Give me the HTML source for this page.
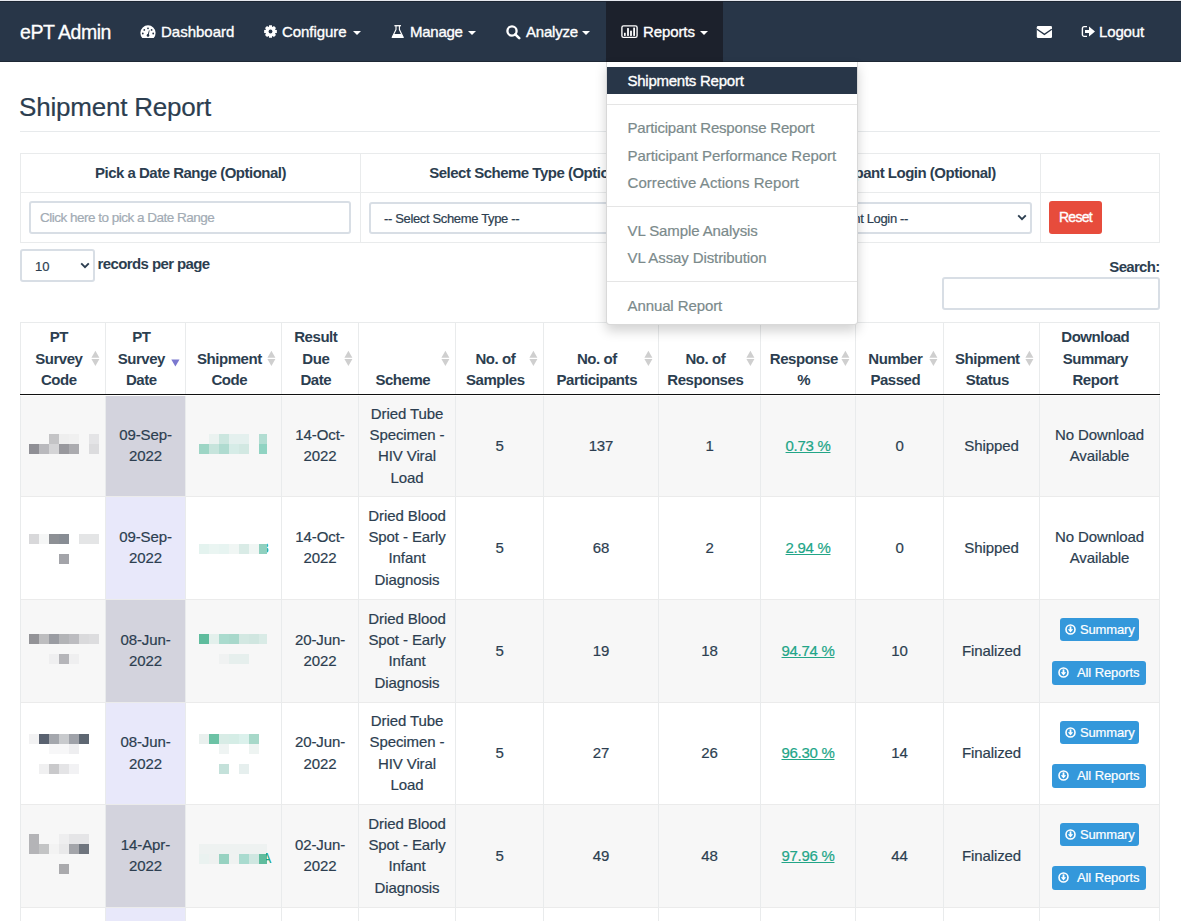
<!DOCTYPE html>
<html><head><meta charset="utf-8"><title>Shipment Report</title>
<style>
*{box-sizing:border-box}
html,body{margin:0;padding:0;width:1181px;height:921px;overflow:hidden;background:#fff}
body{font-family:"Liberation Sans",sans-serif;position:relative}
.a{position:absolute;white-space:nowrap;font-family:"Liberation Sans",sans-serif}
.r{position:absolute}
.n{-webkit-text-stroke:0.2px currentColor}
</style></head><body>
<div class="r" style="left:0px;top:0px;width:1181px;height:1px;background:#e6e9ef;"></div>
<div class="r" style="left:0px;top:1px;width:1181px;height:61px;background:#283648;"></div>
<div class="r" style="left:0px;top:61px;width:1181px;height:1px;background:#1e2835;"></div>
<div class="r" style="left:0px;top:1px;width:1181px;height:1px;background:#1d2633;"></div>
<div class="r" style="left:606px;top:1px;width:117px;height:61px;background:#1c212c;"></div>
<div class="r" style="left:606px;top:61px;width:117px;height:1px;background:#151920;"></div>
<div class="a n" style="top:22.69px;font-size:19.5px;line-height:19.5px;color:#fff;letter-spacing:-0.45px;left:20px;-webkit-text-stroke:0.3px #fff">ePT Admin</div>
<div class="a n" style="top:24.30px;font-size:15px;line-height:15px;color:#fff;left:161px;-webkit-text-stroke:0.35px #fff">Dashboard</div>
<div class="a n" style="top:24.30px;font-size:15px;line-height:15px;color:#fff;letter-spacing:-0.05px;left:282px;-webkit-text-stroke:0.35px #fff">Configure</div>
<div class="a n" style="top:24.30px;font-size:15px;line-height:15px;color:#fff;letter-spacing:-0.25px;left:410px;-webkit-text-stroke:0.35px #fff">Manage</div>
<div class="a n" style="top:24.30px;font-size:15px;line-height:15px;color:#fff;letter-spacing:-0.2px;left:526px;-webkit-text-stroke:0.35px #fff">Analyze</div>
<div class="a n" style="top:24.30px;font-size:15px;line-height:15px;color:#fff;letter-spacing:-0.1px;left:643px;-webkit-text-stroke:0.35px #fff">Reports</div>
<div class="a n" style="top:24.30px;font-size:15px;line-height:15px;color:#fff;letter-spacing:-0.15px;left:1099px;-webkit-text-stroke:0.35px #fff">Logout</div>
<div class="r" style="left:353px;top:31px;width:0;height:0;border-left:4px solid transparent;border-right:4px solid transparent;border-top:4px solid #fff"></div>
<div class="r" style="left:468px;top:31px;width:0;height:0;border-left:4px solid transparent;border-right:4px solid transparent;border-top:4px solid #fff"></div>
<div class="r" style="left:582px;top:31px;width:0;height:0;border-left:4px solid transparent;border-right:4px solid transparent;border-top:4px solid #fff"></div>
<div class="r" style="left:700px;top:31px;width:0;height:0;border-left:4px solid transparent;border-right:4px solid transparent;border-top:4px solid #fff"></div>
<svg class="r" style="left:140px;top:25px" width="16" height="14" viewBox="0 0 16 14">
<path d="M2.3 13 A7.6 7.6 0 1 1 13.7 13 Z" fill="#fff"/>
<circle cx="8" cy="3.3" r="0.9" fill="#283648"/><circle cx="4.3" cy="4.9" r="0.9" fill="#283648"/><circle cx="11.6" cy="4.9" r="0.9" fill="#283648"/>
<circle cx="2.8" cy="8.5" r="0.9" fill="#283648"/><circle cx="13.2" cy="8.5" r="0.9" fill="#283648"/>
<circle cx="8" cy="10.4" r="1.3" fill="#283648"/><path d="M7.4 10.2 L9 5.2 L9.6 5.4 L8.6 10.6 Z" fill="#283648"/>
</svg>
<svg class="r" style="left:264px;top:25px" width="13" height="13" viewBox="0 0 13 13">
<polygon points="12.84,5.08 12.84,7.92 11.09,8.23 10.96,8.52 11.99,9.98 9.98,11.99 8.52,10.96 8.23,11.09 7.92,12.84 5.08,12.84 4.77,11.09 4.48,10.96 3.02,11.99 1.01,9.98 2.04,8.52 1.91,8.23 0.16,7.92 0.16,5.08 1.91,4.77 2.04,4.48 1.01,3.02 3.02,1.01 4.48,2.04 4.77,1.91 5.08,0.16 7.92,0.16 8.23,1.91 8.52,2.04 9.98,1.01 11.99,3.02 10.96,4.48 11.09,4.77" fill="#fff"/><circle cx="6.5" cy="6.5" r="1.9" fill="#283648"/></svg>
<svg class="r" style="left:391px;top:24px" width="14" height="15" viewBox="0 0 14 15">
<path d="M3.4 1.7 H10" fill="none" stroke="#fff" stroke-width="1.3"/>
<path d="M5 1.7 V5.6 L1.1 13.4 M8.4 1.7 V5.6 L12.3 13.4" fill="none" stroke="#fff" stroke-width="1.1"/>
<path d="M2.9 9.9 H10.5 L12.9 14 H0.5 Z" fill="#fff"/></svg>
<svg class="r" style="left:505px;top:24px" width="16" height="16" viewBox="0 0 16 16">
<circle cx="7" cy="7" r="4.6" fill="none" stroke="#fff" stroke-width="2.3"/>
<path d="M10.3 10.3 L14.2 14.2" stroke="#fff" stroke-width="2.6" stroke-linecap="round"/></svg>
<svg class="r" style="left:621px;top:25px" width="17" height="14" viewBox="0 0 17 14">
<rect x="0.9" y="0.8" width="15.2" height="11.6" rx="1.6" fill="none" stroke="#fff" stroke-width="1.35"/>
<rect x="3" y="7.8" width="1.7" height="3.1" fill="#fff"/><rect x="6.1" y="3.1" width="1.8" height="7.8" fill="#fff"/>
<rect x="9.1" y="5.7" width="1.8" height="5.2" fill="#fff"/><rect x="12.2" y="2.6" width="1.8" height="8.3" fill="#fff"/></svg>
<svg class="r" style="left:1036px;top:25px" width="17" height="14" viewBox="0 0 17 14">
<rect x="0.8" y="0.9" width="15.2" height="12.2" rx="1.3" fill="#fff"/>
<path d="M1 4.2 L8.4 9.4 L15.8 4.2" fill="none" stroke="#283648" stroke-width="1.3"/></svg>
<svg class="r" style="left:1081px;top:25px" width="16" height="13" viewBox="0 0 16 13">
<path d="M6 1.6 H3.2 A1.8 1.8 0 0 0 1.4 3.4 V9.6 A1.8 1.8 0 0 0 3.2 11.4 H6" fill="none" stroke="#fff" stroke-width="1.4"/>
<path d="M4 5 H8 V1.6 L14 6.5 L8 11.4 V8 H4 Z" fill="#fff"/></svg>
<div class="a n" style="top:93.99px;font-size:26px;line-height:26px;color:#2c3e50;letter-spacing:-0.2px;left:19px;">Shipment Report</div>
<div class="r" style="left:20px;top:131px;width:1140px;height:1px;background:#e7eaec;"></div>
<div class="r" style="left:20px;top:153px;width:1140px;height:1px;background:#e9ebec;"></div>
<div class="r" style="left:20px;top:192px;width:1140px;height:1px;background:#e9ebec;"></div>
<div class="r" style="left:20px;top:242px;width:1140px;height:1px;background:#e9ebec;"></div>
<div class="r" style="left:20px;top:153px;width:1px;height:90px;background:#e9ebec;"></div>
<div class="r" style="left:360px;top:153px;width:1px;height:90px;background:#e9ebec;"></div>
<div class="r" style="left:703px;top:153px;width:1px;height:90px;background:#e9ebec;"></div>
<div class="r" style="left:1040px;top:153px;width:1px;height:90px;background:#e9ebec;"></div>
<div class="r" style="left:1159px;top:153px;width:1px;height:90px;background:#e9ebec;"></div>
<div class="a" style="top:165.30px;font-size:15px;line-height:15px;color:#2c3e50;font-weight:700;letter-spacing:-0.5px;left:-109.5px;width:600px;text-align:center;">Pick a Date Range (Optional)</div>
<div class="a" style="top:165.30px;font-size:15px;line-height:15px;color:#2c3e50;font-weight:700;letter-spacing:-0.5px;left:231.5px;width:600px;text-align:center;">Select Scheme Type (Optional)</div>
<div class="a" style="top:165.30px;font-size:15px;line-height:15px;color:#2c3e50;font-weight:700;letter-spacing:-0.5px;left:581.5px;width:600px;text-align:center;">Select Participant Login (Optional)</div>
<div class="r" style="left:29px;top:201px;width:322px;height:33px;border:2px solid #d8dee5;border-radius:3px;background:#fff"></div>
<div class="a n" style="top:210.57px;font-size:13.5px;line-height:13.5px;color:#a2abb4;letter-spacing:-0.5px;left:40px;">Click here to pick a Date Range</div>
<div class="r" style="left:369px;top:202px;width:325px;height:32px;border:2px solid #d8dee5;border-radius:3px;background:#fff"></div>
<div class="a n" style="top:212.00px;font-size:13px;line-height:13px;color:#2c3e50;letter-spacing:-0.35px;left:384px;">-- Select Scheme Type --</div>
<div class="r" style="left:712px;top:202px;width:320px;height:32px;border:2px solid #d8dee5;border-radius:3px;background:#fff"></div>
<div class="a n" style="top:212.00px;font-size:13px;line-height:13px;color:#2c3e50;letter-spacing:-0.35px;left:308px;width:600px;text-align:right;">-- Select Participant Login --</div>
<svg class="r" style="left:1017px;top:214px" width="10" height="7" viewBox="0 0 10 7"><path d="M1.2 1.3 L5 5.1 L8.8 1.3" fill="none" stroke="#2c3e50" stroke-width="1.9"/></svg>
<div class="r" style="left:1049px;top:201px;width:53px;height:33px;background:#e74c3c;border-radius:3px"></div>
<div class="a n" style="top:210.15px;font-size:14px;line-height:14px;color:#fff;letter-spacing:-0.7px;left:775.5px;width:600px;text-align:center;-webkit-text-stroke:0.35px #fff">Reset</div>
<div class="r" style="left:20px;top:249px;width:75px;height:32.5px;border:2px solid #d8dee5;border-radius:3px;background:#fff"></div>
<div class="a n" style="top:260.00px;font-size:13px;line-height:13px;color:#2c3e50;left:35px;">10</div>
<svg class="r" style="left:80px;top:262px" width="10" height="7" viewBox="0 0 10 7"><path d="M1.2 1.3 L5 5.1 L8.8 1.3" fill="none" stroke="#2c3e50" stroke-width="1.9"/></svg>
<div class="a" style="top:256.30px;font-size:15px;line-height:15px;color:#2c3e50;font-weight:700;letter-spacing:-0.6px;left:97.5px;">records per page</div>
<div class="a" style="top:259.30px;font-size:15px;line-height:15px;color:#2c3e50;font-weight:700;letter-spacing:-0.7px;left:559.5px;width:600px;text-align:right;">Search:</div>
<div class="r" style="left:942px;top:277px;width:218px;height:33px;border:2px solid #d8dee5;border-radius:3px;background:#fff"></div>
<div class="r" style="left:20px;top:322px;width:1140px;height:1px;background:#e9ebec;"></div>
<div class="a" style="top:329.14px;font-size:15px;line-height:15px;color:#2c3e50;font-weight:700;letter-spacing:-0.45px;left:-241.2px;width:600px;text-align:center;">PT</div>
<div class="a" style="top:350.57px;font-size:15px;line-height:15px;color:#2c3e50;font-weight:700;letter-spacing:-0.45px;left:-241.2px;width:600px;text-align:center;">Survey</div>
<div class="a" style="top:372.00px;font-size:15px;line-height:15px;color:#2c3e50;font-weight:700;letter-spacing:-0.45px;left:-241.2px;width:600px;text-align:center;">Code</div>
<svg class="r" style="left:90.5px;top:350px" width="9" height="16" viewBox="0 0 9 16"><path d="M4.4 0.8 L8.4 7.7 H0.4 Z M0.4 9.1 H8.4 L4.4 15.9 Z" fill="#cfcfcf"/></svg>
<div class="a" style="top:329.14px;font-size:15px;line-height:15px;color:#2c3e50;font-weight:700;letter-spacing:-0.45px;left:-158.7px;width:600px;text-align:center;">PT</div>
<div class="a" style="top:350.57px;font-size:15px;line-height:15px;color:#2c3e50;font-weight:700;letter-spacing:-0.45px;left:-158.7px;width:600px;text-align:center;">Survey</div>
<div class="a" style="top:372.00px;font-size:15px;line-height:15px;color:#2c3e50;font-weight:700;letter-spacing:-0.45px;left:-158.7px;width:600px;text-align:center;">Date</div>
<svg class="r" style="left:170.5px;top:358.5px" width="9" height="8" viewBox="0 0 9 8"><path d="M0.3 0.5 H8.5 L4.4 7.4 Z" fill="#7b78cf"/></svg>
<div class="a" style="top:350.57px;font-size:15px;line-height:15px;color:#2c3e50;font-weight:700;letter-spacing:-0.45px;left:-70.69999999999999px;width:600px;text-align:center;">Shipment</div>
<div class="a" style="top:372.00px;font-size:15px;line-height:15px;color:#2c3e50;font-weight:700;letter-spacing:-0.45px;left:-70.69999999999999px;width:600px;text-align:center;">Code</div>
<svg class="r" style="left:266.5px;top:350px" width="9" height="16" viewBox="0 0 9 16"><path d="M4.4 0.8 L8.4 7.7 H0.4 Z M0.4 9.1 H8.4 L4.4 15.9 Z" fill="#cfcfcf"/></svg>
<div class="a" style="top:329.14px;font-size:15px;line-height:15px;color:#2c3e50;font-weight:700;letter-spacing:-0.45px;left:15.800000000000011px;width:600px;text-align:center;">Result</div>
<div class="a" style="top:350.57px;font-size:15px;line-height:15px;color:#2c3e50;font-weight:700;letter-spacing:-0.45px;left:15.800000000000011px;width:600px;text-align:center;">Due</div>
<div class="a" style="top:372.00px;font-size:15px;line-height:15px;color:#2c3e50;font-weight:700;letter-spacing:-0.45px;left:15.800000000000011px;width:600px;text-align:center;">Date</div>
<svg class="r" style="left:343.5px;top:350px" width="9" height="16" viewBox="0 0 9 16"><path d="M4.4 0.8 L8.4 7.7 H0.4 Z M0.4 9.1 H8.4 L4.4 15.9 Z" fill="#cfcfcf"/></svg>
<div class="a" style="top:372.00px;font-size:15px;line-height:15px;color:#2c3e50;font-weight:700;letter-spacing:-0.45px;left:102.80000000000001px;width:600px;text-align:center;">Scheme</div>
<svg class="r" style="left:440.5px;top:350px" width="9" height="16" viewBox="0 0 9 16"><path d="M4.4 0.8 L8.4 7.7 H0.4 Z M0.4 9.1 H8.4 L4.4 15.9 Z" fill="#cfcfcf"/></svg>
<div class="a" style="top:350.57px;font-size:15px;line-height:15px;color:#2c3e50;font-weight:700;letter-spacing:-0.45px;left:195.3px;width:600px;text-align:center;">No. of</div>
<div class="a" style="top:372.00px;font-size:15px;line-height:15px;color:#2c3e50;font-weight:700;letter-spacing:-0.45px;left:195.3px;width:600px;text-align:center;">Samples</div>
<svg class="r" style="left:528.5px;top:350px" width="9" height="16" viewBox="0 0 9 16"><path d="M4.4 0.8 L8.4 7.7 H0.4 Z M0.4 9.1 H8.4 L4.4 15.9 Z" fill="#cfcfcf"/></svg>
<div class="a" style="top:350.57px;font-size:15px;line-height:15px;color:#2c3e50;font-weight:700;letter-spacing:-0.45px;left:296.79999999999995px;width:600px;text-align:center;">No. of</div>
<div class="a" style="top:372.00px;font-size:15px;line-height:15px;color:#2c3e50;font-weight:700;letter-spacing:-0.45px;left:296.79999999999995px;width:600px;text-align:center;">Participants</div>
<svg class="r" style="left:643.5px;top:350px" width="9" height="16" viewBox="0 0 9 16"><path d="M4.4 0.8 L8.4 7.7 H0.4 Z M0.4 9.1 H8.4 L4.4 15.9 Z" fill="#cfcfcf"/></svg>
<div class="a" style="top:350.57px;font-size:15px;line-height:15px;color:#2c3e50;font-weight:700;letter-spacing:-0.45px;left:405.29999999999995px;width:600px;text-align:center;">No. of</div>
<div class="a" style="top:372.00px;font-size:15px;line-height:15px;color:#2c3e50;font-weight:700;letter-spacing:-0.45px;left:405.29999999999995px;width:600px;text-align:center;">Responses</div>
<svg class="r" style="left:745.5px;top:350px" width="9" height="16" viewBox="0 0 9 16"><path d="M4.4 0.8 L8.4 7.7 H0.4 Z M0.4 9.1 H8.4 L4.4 15.9 Z" fill="#cfcfcf"/></svg>
<div class="a" style="top:350.57px;font-size:15px;line-height:15px;color:#2c3e50;font-weight:700;letter-spacing:-0.45px;left:503.79999999999995px;width:600px;text-align:center;">Response</div>
<div class="a" style="top:372.00px;font-size:15px;line-height:15px;color:#2c3e50;font-weight:700;letter-spacing:-0.45px;left:503.79999999999995px;width:600px;text-align:center;">%</div>
<svg class="r" style="left:840.5px;top:350px" width="9" height="16" viewBox="0 0 9 16"><path d="M4.4 0.8 L8.4 7.7 H0.4 Z M0.4 9.1 H8.4 L4.4 15.9 Z" fill="#cfcfcf"/></svg>
<div class="a" style="top:350.57px;font-size:15px;line-height:15px;color:#2c3e50;font-weight:700;letter-spacing:-0.45px;left:595.3px;width:600px;text-align:center;">Number</div>
<div class="a" style="top:372.00px;font-size:15px;line-height:15px;color:#2c3e50;font-weight:700;letter-spacing:-0.45px;left:595.3px;width:600px;text-align:center;">Passed</div>
<svg class="r" style="left:928.5px;top:350px" width="9" height="16" viewBox="0 0 9 16"><path d="M4.4 0.8 L8.4 7.7 H0.4 Z M0.4 9.1 H8.4 L4.4 15.9 Z" fill="#cfcfcf"/></svg>
<div class="a" style="top:350.57px;font-size:15px;line-height:15px;color:#2c3e50;font-weight:700;letter-spacing:-0.45px;left:687.3px;width:600px;text-align:center;">Shipment</div>
<div class="a" style="top:372.00px;font-size:15px;line-height:15px;color:#2c3e50;font-weight:700;letter-spacing:-0.45px;left:687.3px;width:600px;text-align:center;">Status</div>
<svg class="r" style="left:1024.5px;top:350px" width="9" height="16" viewBox="0 0 9 16"><path d="M4.4 0.8 L8.4 7.7 H0.4 Z M0.4 9.1 H8.4 L4.4 15.9 Z" fill="#cfcfcf"/></svg>
<div class="a" style="top:329.14px;font-size:15px;line-height:15px;color:#2c3e50;font-weight:700;letter-spacing:-0.45px;left:795.3px;width:600px;text-align:center;">Download</div>
<div class="a" style="top:350.57px;font-size:15px;line-height:15px;color:#2c3e50;font-weight:700;letter-spacing:-0.45px;left:795.3px;width:600px;text-align:center;">Summary</div>
<div class="a" style="top:372.00px;font-size:15px;line-height:15px;color:#2c3e50;font-weight:700;letter-spacing:-0.45px;left:795.3px;width:600px;text-align:center;">Report</div>
<div class="r" style="left:20px;top:396px;width:1140px;height:100px;background:#f7f7f7;"></div>
<div class="r" style="left:106px;top:396px;width:79px;height:100px;background:#d3d3dd;"></div>
<div class="r" style="left:20px;top:496px;width:1140px;height:1px;background:#ebebeb;"></div>
<div class="a n" style="top:426.99px;font-size:15px;line-height:15px;color:#2c3e50;letter-spacing:-0.1px;left:-154.5px;width:600px;text-align:center;">09-Sep-</div>
<div class="a n" style="top:448.42px;font-size:15px;line-height:15px;color:#2c3e50;letter-spacing:-0.1px;left:-154.5px;width:600px;text-align:center;">2022</div>
<div class="a n" style="top:426.99px;font-size:15px;line-height:15px;color:#2c3e50;letter-spacing:-0.1px;left:20.0px;width:600px;text-align:center;">14-Oct-</div>
<div class="a n" style="top:448.42px;font-size:15px;line-height:15px;color:#2c3e50;letter-spacing:-0.1px;left:20.0px;width:600px;text-align:center;">2022</div>
<div class="a n" style="top:405.56px;font-size:15px;line-height:15px;color:#2c3e50;letter-spacing:-0.1px;left:107.0px;width:600px;text-align:center;">Dried Tube</div>
<div class="a n" style="top:426.99px;font-size:15px;line-height:15px;color:#2c3e50;letter-spacing:-0.1px;left:107.0px;width:600px;text-align:center;">Specimen -</div>
<div class="a n" style="top:448.42px;font-size:15px;line-height:15px;color:#2c3e50;letter-spacing:-0.1px;left:107.0px;width:600px;text-align:center;">HIV Viral</div>
<div class="a n" style="top:469.85px;font-size:15px;line-height:15px;color:#2c3e50;letter-spacing:-0.1px;left:107.0px;width:600px;text-align:center;">Load</div>
<div class="a n" style="top:437.70px;font-size:15px;line-height:15px;color:#2c3e50;letter-spacing:-0.1px;left:199.5px;width:600px;text-align:center;">5</div>
<div class="a n" style="top:437.70px;font-size:15px;line-height:15px;color:#2c3e50;letter-spacing:-0.1px;left:301.0px;width:600px;text-align:center;">137</div>
<div class="a n" style="top:437.70px;font-size:15px;line-height:15px;color:#2c3e50;letter-spacing:-0.1px;left:409.5px;width:600px;text-align:center;">1</div>
<div class="a n" style="top:437.70px;font-size:15px;line-height:15px;color:#22a587;letter-spacing:-0.1px;left:508.0px;width:600px;text-align:center;text-decoration:underline;text-underline-offset:1px;letter-spacing:-0.3px">0.73 %</div>
<div class="a n" style="top:437.70px;font-size:15px;line-height:15px;color:#2c3e50;letter-spacing:-0.1px;left:599.5px;width:600px;text-align:center;">0</div>
<div class="a n" style="top:437.70px;font-size:15px;line-height:15px;color:#2c3e50;letter-spacing:-0.1px;left:691.5px;width:600px;text-align:center;">Shipped</div>
<div class="a n" style="top:426.99px;font-size:15px;line-height:15px;color:#2c3e50;letter-spacing:-0.1px;left:799.5px;width:600px;text-align:center;">No Download</div>
<div class="a n" style="top:448.42px;font-size:15px;line-height:15px;color:#2c3e50;letter-spacing:-0.1px;left:799.5px;width:600px;text-align:center;">Available</div>
<div class="r" style="left:20px;top:497px;width:1140px;height:102px;background:#fff;"></div>
<div class="r" style="left:106px;top:497px;width:79px;height:102px;background:#e8e8fa;"></div>
<div class="r" style="left:20px;top:599px;width:1140px;height:1px;background:#ebebeb;"></div>
<div class="a n" style="top:528.99px;font-size:15px;line-height:15px;color:#2c3e50;letter-spacing:-0.1px;left:-154.5px;width:600px;text-align:center;">09-Sep-</div>
<div class="a n" style="top:550.42px;font-size:15px;line-height:15px;color:#2c3e50;letter-spacing:-0.1px;left:-154.5px;width:600px;text-align:center;">2022</div>
<div class="a n" style="top:528.99px;font-size:15px;line-height:15px;color:#2c3e50;letter-spacing:-0.1px;left:20.0px;width:600px;text-align:center;">14-Oct-</div>
<div class="a n" style="top:550.42px;font-size:15px;line-height:15px;color:#2c3e50;letter-spacing:-0.1px;left:20.0px;width:600px;text-align:center;">2022</div>
<div class="a n" style="top:507.56px;font-size:15px;line-height:15px;color:#2c3e50;letter-spacing:-0.1px;left:107.0px;width:600px;text-align:center;">Dried Blood</div>
<div class="a n" style="top:528.99px;font-size:15px;line-height:15px;color:#2c3e50;letter-spacing:-0.1px;left:107.0px;width:600px;text-align:center;">Spot - Early</div>
<div class="a n" style="top:550.42px;font-size:15px;line-height:15px;color:#2c3e50;letter-spacing:-0.1px;left:107.0px;width:600px;text-align:center;">Infant</div>
<div class="a n" style="top:571.85px;font-size:15px;line-height:15px;color:#2c3e50;letter-spacing:-0.1px;left:107.0px;width:600px;text-align:center;">Diagnosis</div>
<div class="a n" style="top:539.70px;font-size:15px;line-height:15px;color:#2c3e50;letter-spacing:-0.1px;left:199.5px;width:600px;text-align:center;">5</div>
<div class="a n" style="top:539.70px;font-size:15px;line-height:15px;color:#2c3e50;letter-spacing:-0.1px;left:301.0px;width:600px;text-align:center;">68</div>
<div class="a n" style="top:539.70px;font-size:15px;line-height:15px;color:#2c3e50;letter-spacing:-0.1px;left:409.5px;width:600px;text-align:center;">2</div>
<div class="a n" style="top:539.70px;font-size:15px;line-height:15px;color:#22a587;letter-spacing:-0.1px;left:508.0px;width:600px;text-align:center;text-decoration:underline;text-underline-offset:1px;letter-spacing:-0.3px">2.94 %</div>
<div class="a n" style="top:539.70px;font-size:15px;line-height:15px;color:#2c3e50;letter-spacing:-0.1px;left:599.5px;width:600px;text-align:center;">0</div>
<div class="a n" style="top:539.70px;font-size:15px;line-height:15px;color:#2c3e50;letter-spacing:-0.1px;left:691.5px;width:600px;text-align:center;">Shipped</div>
<div class="a n" style="top:528.99px;font-size:15px;line-height:15px;color:#2c3e50;letter-spacing:-0.1px;left:799.5px;width:600px;text-align:center;">No Download</div>
<div class="a n" style="top:550.42px;font-size:15px;line-height:15px;color:#2c3e50;letter-spacing:-0.1px;left:799.5px;width:600px;text-align:center;">Available</div>
<div class="r" style="left:20px;top:600px;width:1140px;height:102px;background:#f7f7f7;"></div>
<div class="r" style="left:106px;top:600px;width:79px;height:102px;background:#d3d3dd;"></div>
<div class="r" style="left:20px;top:702px;width:1140px;height:1px;background:#ebebeb;"></div>
<div class="a n" style="top:631.99px;font-size:15px;line-height:15px;color:#2c3e50;letter-spacing:-0.1px;left:-154.5px;width:600px;text-align:center;">08-Jun-</div>
<div class="a n" style="top:653.42px;font-size:15px;line-height:15px;color:#2c3e50;letter-spacing:-0.1px;left:-154.5px;width:600px;text-align:center;">2022</div>
<div class="a n" style="top:631.99px;font-size:15px;line-height:15px;color:#2c3e50;letter-spacing:-0.1px;left:20.0px;width:600px;text-align:center;">20-Jun-</div>
<div class="a n" style="top:653.42px;font-size:15px;line-height:15px;color:#2c3e50;letter-spacing:-0.1px;left:20.0px;width:600px;text-align:center;">2022</div>
<div class="a n" style="top:610.56px;font-size:15px;line-height:15px;color:#2c3e50;letter-spacing:-0.1px;left:107.0px;width:600px;text-align:center;">Dried Blood</div>
<div class="a n" style="top:631.99px;font-size:15px;line-height:15px;color:#2c3e50;letter-spacing:-0.1px;left:107.0px;width:600px;text-align:center;">Spot - Early</div>
<div class="a n" style="top:653.42px;font-size:15px;line-height:15px;color:#2c3e50;letter-spacing:-0.1px;left:107.0px;width:600px;text-align:center;">Infant</div>
<div class="a n" style="top:674.85px;font-size:15px;line-height:15px;color:#2c3e50;letter-spacing:-0.1px;left:107.0px;width:600px;text-align:center;">Diagnosis</div>
<div class="a n" style="top:642.70px;font-size:15px;line-height:15px;color:#2c3e50;letter-spacing:-0.1px;left:199.5px;width:600px;text-align:center;">5</div>
<div class="a n" style="top:642.70px;font-size:15px;line-height:15px;color:#2c3e50;letter-spacing:-0.1px;left:301.0px;width:600px;text-align:center;">19</div>
<div class="a n" style="top:642.70px;font-size:15px;line-height:15px;color:#2c3e50;letter-spacing:-0.1px;left:409.5px;width:600px;text-align:center;">18</div>
<div class="a n" style="top:642.70px;font-size:15px;line-height:15px;color:#22a587;letter-spacing:-0.1px;left:508.0px;width:600px;text-align:center;text-decoration:underline;text-underline-offset:1px;letter-spacing:-0.3px">94.74 %</div>
<div class="a n" style="top:642.70px;font-size:15px;line-height:15px;color:#2c3e50;letter-spacing:-0.1px;left:599.5px;width:600px;text-align:center;">10</div>
<div class="a n" style="top:642.70px;font-size:15px;line-height:15px;color:#2c3e50;letter-spacing:-0.1px;left:691.5px;width:600px;text-align:center;">Finalized</div>
<div class="r" style="left:1060px;top:618px;width:79px;height:23px;background:#3498db;border-radius:3px"></div>
<div class="a n" style="top:623.00px;font-size:13px;line-height:13px;color:#fff;letter-spacing:-0.15px;left:1080px;">Summary</div>
<svg class="r" style="left:1065px;top:624px" width="11" height="11" viewBox="0 0 11 11"><circle cx="5.5" cy="5.5" r="4.5" fill="none" stroke="#fff" stroke-width="1.6"/><rect x="4.6" y="2.4" width="1.8" height="3.6" fill="#fff"/><path d="M2.8 5.2 H8.2 L5.5 8.4 Z" fill="#fff"/></svg>
<div class="r" style="left:1052px;top:661px;width:94px;height:24px;background:#3498db;border-radius:3px"></div>
<div class="a n" style="top:666.00px;font-size:13px;line-height:13px;color:#fff;letter-spacing:-0.1px;left:1077px;">All Reports</div>
<svg class="r" style="left:1058px;top:667px" width="11" height="11" viewBox="0 0 11 11"><circle cx="5.5" cy="5.5" r="4.5" fill="none" stroke="#fff" stroke-width="1.6"/><rect x="4.6" y="2.4" width="1.8" height="3.6" fill="#fff"/><path d="M2.8 5.2 H8.2 L5.5 8.4 Z" fill="#fff"/></svg>
<div class="r" style="left:20px;top:703px;width:1140px;height:101px;background:#fff;"></div>
<div class="r" style="left:106px;top:703px;width:79px;height:101px;background:#e8e8fa;"></div>
<div class="r" style="left:20px;top:804px;width:1140px;height:1px;background:#ebebeb;"></div>
<div class="a n" style="top:734.49px;font-size:15px;line-height:15px;color:#2c3e50;letter-spacing:-0.1px;left:-154.5px;width:600px;text-align:center;">08-Jun-</div>
<div class="a n" style="top:755.92px;font-size:15px;line-height:15px;color:#2c3e50;letter-spacing:-0.1px;left:-154.5px;width:600px;text-align:center;">2022</div>
<div class="a n" style="top:734.49px;font-size:15px;line-height:15px;color:#2c3e50;letter-spacing:-0.1px;left:20.0px;width:600px;text-align:center;">20-Jun-</div>
<div class="a n" style="top:755.92px;font-size:15px;line-height:15px;color:#2c3e50;letter-spacing:-0.1px;left:20.0px;width:600px;text-align:center;">2022</div>
<div class="a n" style="top:713.06px;font-size:15px;line-height:15px;color:#2c3e50;letter-spacing:-0.1px;left:107.0px;width:600px;text-align:center;">Dried Tube</div>
<div class="a n" style="top:734.49px;font-size:15px;line-height:15px;color:#2c3e50;letter-spacing:-0.1px;left:107.0px;width:600px;text-align:center;">Specimen -</div>
<div class="a n" style="top:755.92px;font-size:15px;line-height:15px;color:#2c3e50;letter-spacing:-0.1px;left:107.0px;width:600px;text-align:center;">HIV Viral</div>
<div class="a n" style="top:777.35px;font-size:15px;line-height:15px;color:#2c3e50;letter-spacing:-0.1px;left:107.0px;width:600px;text-align:center;">Load</div>
<div class="a n" style="top:745.20px;font-size:15px;line-height:15px;color:#2c3e50;letter-spacing:-0.1px;left:199.5px;width:600px;text-align:center;">5</div>
<div class="a n" style="top:745.20px;font-size:15px;line-height:15px;color:#2c3e50;letter-spacing:-0.1px;left:301.0px;width:600px;text-align:center;">27</div>
<div class="a n" style="top:745.20px;font-size:15px;line-height:15px;color:#2c3e50;letter-spacing:-0.1px;left:409.5px;width:600px;text-align:center;">26</div>
<div class="a n" style="top:745.20px;font-size:15px;line-height:15px;color:#22a587;letter-spacing:-0.1px;left:508.0px;width:600px;text-align:center;text-decoration:underline;text-underline-offset:1px;letter-spacing:-0.3px">96.30 %</div>
<div class="a n" style="top:745.20px;font-size:15px;line-height:15px;color:#2c3e50;letter-spacing:-0.1px;left:599.5px;width:600px;text-align:center;">14</div>
<div class="a n" style="top:745.20px;font-size:15px;line-height:15px;color:#2c3e50;letter-spacing:-0.1px;left:691.5px;width:600px;text-align:center;">Finalized</div>
<div class="r" style="left:1060px;top:721px;width:79px;height:23px;background:#3498db;border-radius:3px"></div>
<div class="a n" style="top:726.00px;font-size:13px;line-height:13px;color:#fff;letter-spacing:-0.15px;left:1080px;">Summary</div>
<svg class="r" style="left:1065px;top:727px" width="11" height="11" viewBox="0 0 11 11"><circle cx="5.5" cy="5.5" r="4.5" fill="none" stroke="#fff" stroke-width="1.6"/><rect x="4.6" y="2.4" width="1.8" height="3.6" fill="#fff"/><path d="M2.8 5.2 H8.2 L5.5 8.4 Z" fill="#fff"/></svg>
<div class="r" style="left:1052px;top:764px;width:94px;height:24px;background:#3498db;border-radius:3px"></div>
<div class="a n" style="top:769.00px;font-size:13px;line-height:13px;color:#fff;letter-spacing:-0.1px;left:1077px;">All Reports</div>
<svg class="r" style="left:1058px;top:770px" width="11" height="11" viewBox="0 0 11 11"><circle cx="5.5" cy="5.5" r="4.5" fill="none" stroke="#fff" stroke-width="1.6"/><rect x="4.6" y="2.4" width="1.8" height="3.6" fill="#fff"/><path d="M2.8 5.2 H8.2 L5.5 8.4 Z" fill="#fff"/></svg>
<div class="r" style="left:20px;top:805px;width:1140px;height:102px;background:#f7f7f7;"></div>
<div class="r" style="left:106px;top:805px;width:79px;height:102px;background:#d3d3dd;"></div>
<div class="r" style="left:20px;top:907px;width:1140px;height:1px;background:#ebebeb;"></div>
<div class="a n" style="top:836.99px;font-size:15px;line-height:15px;color:#2c3e50;letter-spacing:-0.1px;left:-154.5px;width:600px;text-align:center;">14-Apr-</div>
<div class="a n" style="top:858.42px;font-size:15px;line-height:15px;color:#2c3e50;letter-spacing:-0.1px;left:-154.5px;width:600px;text-align:center;">2022</div>
<div class="a n" style="top:836.99px;font-size:15px;line-height:15px;color:#2c3e50;letter-spacing:-0.1px;left:20.0px;width:600px;text-align:center;">02-Jun-</div>
<div class="a n" style="top:858.42px;font-size:15px;line-height:15px;color:#2c3e50;letter-spacing:-0.1px;left:20.0px;width:600px;text-align:center;">2022</div>
<div class="a n" style="top:815.56px;font-size:15px;line-height:15px;color:#2c3e50;letter-spacing:-0.1px;left:107.0px;width:600px;text-align:center;">Dried Blood</div>
<div class="a n" style="top:836.99px;font-size:15px;line-height:15px;color:#2c3e50;letter-spacing:-0.1px;left:107.0px;width:600px;text-align:center;">Spot - Early</div>
<div class="a n" style="top:858.42px;font-size:15px;line-height:15px;color:#2c3e50;letter-spacing:-0.1px;left:107.0px;width:600px;text-align:center;">Infant</div>
<div class="a n" style="top:879.85px;font-size:15px;line-height:15px;color:#2c3e50;letter-spacing:-0.1px;left:107.0px;width:600px;text-align:center;">Diagnosis</div>
<div class="a n" style="top:847.70px;font-size:15px;line-height:15px;color:#2c3e50;letter-spacing:-0.1px;left:199.5px;width:600px;text-align:center;">5</div>
<div class="a n" style="top:847.70px;font-size:15px;line-height:15px;color:#2c3e50;letter-spacing:-0.1px;left:301.0px;width:600px;text-align:center;">49</div>
<div class="a n" style="top:847.70px;font-size:15px;line-height:15px;color:#2c3e50;letter-spacing:-0.1px;left:409.5px;width:600px;text-align:center;">48</div>
<div class="a n" style="top:847.70px;font-size:15px;line-height:15px;color:#22a587;letter-spacing:-0.1px;left:508.0px;width:600px;text-align:center;text-decoration:underline;text-underline-offset:1px;letter-spacing:-0.3px">97.96 %</div>
<div class="a n" style="top:847.70px;font-size:15px;line-height:15px;color:#2c3e50;letter-spacing:-0.1px;left:599.5px;width:600px;text-align:center;">44</div>
<div class="a n" style="top:847.70px;font-size:15px;line-height:15px;color:#2c3e50;letter-spacing:-0.1px;left:691.5px;width:600px;text-align:center;">Finalized</div>
<div class="r" style="left:1060px;top:823px;width:79px;height:23px;background:#3498db;border-radius:3px"></div>
<div class="a n" style="top:828.00px;font-size:13px;line-height:13px;color:#fff;letter-spacing:-0.15px;left:1080px;">Summary</div>
<svg class="r" style="left:1065px;top:829px" width="11" height="11" viewBox="0 0 11 11"><circle cx="5.5" cy="5.5" r="4.5" fill="none" stroke="#fff" stroke-width="1.6"/><rect x="4.6" y="2.4" width="1.8" height="3.6" fill="#fff"/><path d="M2.8 5.2 H8.2 L5.5 8.4 Z" fill="#fff"/></svg>
<div class="r" style="left:1052px;top:866px;width:94px;height:24px;background:#3498db;border-radius:3px"></div>
<div class="a n" style="top:871.00px;font-size:13px;line-height:13px;color:#fff;letter-spacing:-0.1px;left:1077px;">All Reports</div>
<svg class="r" style="left:1058px;top:872px" width="11" height="11" viewBox="0 0 11 11"><circle cx="5.5" cy="5.5" r="4.5" fill="none" stroke="#fff" stroke-width="1.6"/><rect x="4.6" y="2.4" width="1.8" height="3.6" fill="#fff"/><path d="M2.8 5.2 H8.2 L5.5 8.4 Z" fill="#fff"/></svg>
<div class="r" style="left:20px;top:908px;width:1140px;height:102px;background:#fff;"></div>
<div class="r" style="left:106px;top:908px;width:79px;height:102px;background:#e8e8fa;"></div>
<div class="r" style="left:20px;top:1010px;width:1140px;height:1px;background:#ebebeb;"></div>
<div class="a n" style="top:939.99px;font-size:15px;line-height:15px;color:#2c3e50;letter-spacing:-0.1px;left:-154.5px;width:600px;text-align:center;">08-Apr-</div>
<div class="a n" style="top:961.42px;font-size:15px;line-height:15px;color:#2c3e50;letter-spacing:-0.1px;left:-154.5px;width:600px;text-align:center;">2022</div>
<div class="a n" style="top:939.99px;font-size:15px;line-height:15px;color:#2c3e50;letter-spacing:-0.1px;left:20.0px;width:600px;text-align:center;">20-Apr-</div>
<div class="a n" style="top:961.42px;font-size:15px;line-height:15px;color:#2c3e50;letter-spacing:-0.1px;left:20.0px;width:600px;text-align:center;">2022</div>
<div class="a n" style="top:918.56px;font-size:15px;line-height:15px;color:#2c3e50;letter-spacing:-0.1px;left:107.0px;width:600px;text-align:center;">Dried Tube</div>
<div class="a n" style="top:939.99px;font-size:15px;line-height:15px;color:#2c3e50;letter-spacing:-0.1px;left:107.0px;width:600px;text-align:center;">Specimen -</div>
<div class="a n" style="top:961.42px;font-size:15px;line-height:15px;color:#2c3e50;letter-spacing:-0.1px;left:107.0px;width:600px;text-align:center;">HIV Viral</div>
<div class="a n" style="top:982.85px;font-size:15px;line-height:15px;color:#2c3e50;letter-spacing:-0.1px;left:107.0px;width:600px;text-align:center;">Load</div>
<div class="a n" style="top:950.70px;font-size:15px;line-height:15px;color:#2c3e50;letter-spacing:-0.1px;left:199.5px;width:600px;text-align:center;">5</div>
<div class="a n" style="top:950.70px;font-size:15px;line-height:15px;color:#2c3e50;letter-spacing:-0.1px;left:301.0px;width:600px;text-align:center;">30</div>
<div class="a n" style="top:950.70px;font-size:15px;line-height:15px;color:#2c3e50;letter-spacing:-0.1px;left:409.5px;width:600px;text-align:center;">29</div>
<div class="a n" style="top:950.70px;font-size:15px;line-height:15px;color:#22a587;letter-spacing:-0.1px;left:508.0px;width:600px;text-align:center;text-decoration:underline;text-underline-offset:1px;letter-spacing:-0.3px">96.67 %</div>
<div class="a n" style="top:950.70px;font-size:15px;line-height:15px;color:#2c3e50;letter-spacing:-0.1px;left:599.5px;width:600px;text-align:center;">20</div>
<div class="a n" style="top:950.70px;font-size:15px;line-height:15px;color:#2c3e50;letter-spacing:-0.1px;left:691.5px;width:600px;text-align:center;">Finalized</div>
<div class="r" style="left:1060px;top:926px;width:79px;height:23px;background:#3498db;border-radius:3px"></div>
<div class="a n" style="top:931.00px;font-size:13px;line-height:13px;color:#fff;letter-spacing:-0.15px;left:1080px;">Summary</div>
<svg class="r" style="left:1065px;top:932px" width="11" height="11" viewBox="0 0 11 11"><circle cx="5.5" cy="5.5" r="4.5" fill="none" stroke="#fff" stroke-width="1.6"/><rect x="4.6" y="2.4" width="1.8" height="3.6" fill="#fff"/><path d="M2.8 5.2 H8.2 L5.5 8.4 Z" fill="#fff"/></svg>
<div class="r" style="left:1052px;top:969px;width:94px;height:24px;background:#3498db;border-radius:3px"></div>
<div class="a n" style="top:974.00px;font-size:13px;line-height:13px;color:#fff;letter-spacing:-0.1px;left:1077px;">All Reports</div>
<svg class="r" style="left:1058px;top:975px" width="11" height="11" viewBox="0 0 11 11"><circle cx="5.5" cy="5.5" r="4.5" fill="none" stroke="#fff" stroke-width="1.6"/><rect x="4.6" y="2.4" width="1.8" height="3.6" fill="#fff"/><path d="M2.8 5.2 H8.2 L5.5 8.4 Z" fill="#fff"/></svg>
<div class="r" style="left:20px;top:322px;width:1px;height:599px;background:#e9ebec;"></div>
<div class="r" style="left:105px;top:322px;width:1px;height:599px;background:#e9ebec;"></div>
<div class="r" style="left:185px;top:322px;width:1px;height:599px;background:#e9ebec;"></div>
<div class="r" style="left:281px;top:322px;width:1px;height:599px;background:#e9ebec;"></div>
<div class="r" style="left:358px;top:322px;width:1px;height:599px;background:#e9ebec;"></div>
<div class="r" style="left:455px;top:322px;width:1px;height:599px;background:#e9ebec;"></div>
<div class="r" style="left:543px;top:322px;width:1px;height:599px;background:#e9ebec;"></div>
<div class="r" style="left:658px;top:322px;width:1px;height:599px;background:#e9ebec;"></div>
<div class="r" style="left:760px;top:322px;width:1px;height:599px;background:#e9ebec;"></div>
<div class="r" style="left:855px;top:322px;width:1px;height:599px;background:#e9ebec;"></div>
<div class="r" style="left:943px;top:322px;width:1px;height:599px;background:#e9ebec;"></div>
<div class="r" style="left:1039px;top:322px;width:1px;height:599px;background:#e9ebec;"></div>
<div class="r" style="left:1159px;top:322px;width:1px;height:599px;background:#e9ebec;"></div>
<div class="r" style="left:20px;top:394px;width:1140px;height:1px;background:#111;"></div>
<div class="r" style="left:20px;top:395px;width:1140px;height:1px;background:#fff;"></div>
<div class="r" style="left:49px;top:434px;width:10px;height:10px;background:#c4c4c6;"></div>
<div class="r" style="left:59px;top:434px;width:10px;height:10px;background:#eeeeee;"></div>
<div class="r" style="left:69px;top:434px;width:10px;height:10px;background:#f0f0f0;"></div>
<div class="r" style="left:89px;top:434px;width:10px;height:10px;background:#e4e4e6;"></div>
<div class="r" style="left:29px;top:444px;width:10px;height:10px;background:#8f8f95;"></div>
<div class="r" style="left:39px;top:444px;width:10px;height:10px;background:#b9b9bd;"></div>
<div class="r" style="left:49px;top:444px;width:10px;height:10px;background:#d4d4d6;"></div>
<div class="r" style="left:59px;top:444px;width:10px;height:10px;background:#98989d;"></div>
<div class="r" style="left:69px;top:444px;width:10px;height:10px;background:#ababaf;"></div>
<div class="r" style="left:89px;top:444px;width:10px;height:10px;background:#dcdcde;"></div>
<div class="r" style="left:209px;top:434px;width:10px;height:10px;background:#eaf2f0;"></div>
<div class="r" style="left:219px;top:434px;width:10px;height:10px;background:#cbe6df;"></div>
<div class="r" style="left:229px;top:434px;width:10px;height:10px;background:#e4f0ee;"></div>
<div class="r" style="left:239px;top:434px;width:10px;height:10px;background:#e4f0ee;"></div>
<div class="r" style="left:259px;top:434px;width:8px;height:10px;background:#b2ddd2;"></div>
<div class="r" style="left:199px;top:444px;width:10px;height:10px;background:#9dd5c5;"></div>
<div class="r" style="left:209px;top:444px;width:10px;height:10px;background:#c6e4dc;"></div>
<div class="r" style="left:219px;top:444px;width:10px;height:10px;background:#afdbd0;"></div>
<div class="r" style="left:229px;top:444px;width:10px;height:10px;background:#d6ece7;"></div>
<div class="r" style="left:239px;top:444px;width:10px;height:10px;background:#d2e8e2;"></div>
<div class="r" style="left:259px;top:444px;width:8px;height:10px;background:#90d3c2;"></div>
<div class="r" style="left:29px;top:534px;width:10px;height:10px;background:#d8d8da;"></div>
<div class="r" style="left:39px;top:534px;width:10px;height:10px;background:#f5f6f6;"></div>
<div class="r" style="left:49px;top:534px;width:10px;height:10px;background:#8d9095;"></div>
<div class="r" style="left:59px;top:534px;width:10px;height:10px;background:#888d94;"></div>
<div class="r" style="left:79px;top:534px;width:10px;height:10px;background:#e4e5e6;"></div>
<div class="r" style="left:89px;top:534px;width:10px;height:10px;background:#e4e5e6;"></div>
<div class="r" style="left:59px;top:554px;width:10px;height:10px;background:#a3a4a9;"></div>
<div class="r" style="left:199px;top:544px;width:10px;height:10px;background:#e4f3ef;"></div>
<div class="r" style="left:209px;top:544px;width:10px;height:10px;background:#eaf5f2;"></div>
<div class="r" style="left:219px;top:544px;width:10px;height:10px;background:#e7f4f1;"></div>
<div class="r" style="left:229px;top:544px;width:10px;height:10px;background:#f0f6f4;"></div>
<div class="r" style="left:239px;top:544px;width:10px;height:10px;background:#d9ebe6;"></div>
<div class="r" style="left:249px;top:544px;width:10px;height:10px;background:#f0f6f4;"></div>
<div class="r" style="left:259px;top:544px;width:8px;height:10px;background:#8fd0bf;"></div>
<div class="r" style="left:29px;top:634px;width:10px;height:10px;background:#939397;"></div>
<div class="r" style="left:39px;top:634px;width:10px;height:10px;background:#bdbdbf;"></div>
<div class="r" style="left:49px;top:634px;width:10px;height:10px;background:#9a9ca2;"></div>
<div class="r" style="left:59px;top:634px;width:10px;height:10px;background:#b3b4b7;"></div>
<div class="r" style="left:69px;top:634px;width:10px;height:10px;background:#bcbcc0;"></div>
<div class="r" style="left:79px;top:634px;width:10px;height:10px;background:#dadadc;"></div>
<div class="r" style="left:89px;top:634px;width:10px;height:10px;background:#dddddf;"></div>
<div class="r" style="left:49px;top:654px;width:10px;height:10px;background:#efeff0;"></div>
<div class="r" style="left:59px;top:654px;width:10px;height:10px;background:#b5b5b9;"></div>
<div class="r" style="left:69px;top:654px;width:10px;height:10px;background:#efeff0;"></div>
<div class="r" style="left:199px;top:634px;width:10px;height:10px;background:#5fbc9d;"></div>
<div class="r" style="left:209px;top:634px;width:10px;height:10px;background:#e3f0ec;"></div>
<div class="r" style="left:219px;top:634px;width:10px;height:10px;background:#aadbce;"></div>
<div class="r" style="left:229px;top:634px;width:10px;height:10px;background:#a8d8cb;"></div>
<div class="r" style="left:239px;top:634px;width:10px;height:10px;background:#d3e8e2;"></div>
<div class="r" style="left:249px;top:634px;width:10px;height:10px;background:#d0e6e0;"></div>
<div class="r" style="left:259px;top:634px;width:8px;height:10px;background:#d9ebe6;"></div>
<div class="r" style="left:219px;top:654px;width:10px;height:10px;background:#f0f2f2;"></div>
<div class="r" style="left:229px;top:654px;width:10px;height:10px;background:#e6efed;"></div>
<div class="r" style="left:239px;top:654px;width:10px;height:10px;background:#e6efed;"></div>
<div class="r" style="left:29px;top:734px;width:10px;height:10px;background:#f2f2f3;"></div>
<div class="r" style="left:39px;top:734px;width:10px;height:10px;background:#5a6270;"></div>
<div class="r" style="left:49px;top:734px;width:10px;height:10px;background:#a4a7ad;"></div>
<div class="r" style="left:59px;top:734px;width:10px;height:10px;background:#c8cacd;"></div>
<div class="r" style="left:69px;top:734px;width:10px;height:10px;background:#9fa2a9;"></div>
<div class="r" style="left:79px;top:734px;width:10px;height:10px;background:#5e6772;"></div>
<div class="r" style="left:49px;top:744px;width:10px;height:10px;background:#f7f7f8;"></div>
<div class="r" style="left:59px;top:744px;width:10px;height:10px;background:#f7f7f8;"></div>
<div class="r" style="left:69px;top:744px;width:10px;height:10px;background:#eeeef0;"></div>
<div class="r" style="left:39px;top:764px;width:10px;height:10px;background:#f0f0f1;"></div>
<div class="r" style="left:49px;top:764px;width:10px;height:10px;background:#c9c9cb;"></div>
<div class="r" style="left:59px;top:764px;width:10px;height:10px;background:#e4e4e6;"></div>
<div class="r" style="left:69px;top:764px;width:10px;height:10px;background:#f2f2f4;"></div>
<div class="r" style="left:199px;top:734px;width:10px;height:10px;background:#e9f0ee;"></div>
<div class="r" style="left:209px;top:734px;width:10px;height:10px;background:#6cc2a5;"></div>
<div class="r" style="left:219px;top:734px;width:10px;height:10px;background:#d8ece6;"></div>
<div class="r" style="left:229px;top:734px;width:10px;height:10px;background:#d5ede6;"></div>
<div class="r" style="left:239px;top:734px;width:10px;height:10px;background:#dbf1ec;"></div>
<div class="r" style="left:249px;top:734px;width:10px;height:10px;background:#a7d8c9;"></div>
<div class="r" style="left:219px;top:744px;width:10px;height:10px;background:#eff4f3;"></div>
<div class="r" style="left:249px;top:744px;width:10px;height:10px;background:#eef4f2;"></div>
<div class="r" style="left:219px;top:764px;width:10px;height:10px;background:#c4e1da;"></div>
<div class="r" style="left:239px;top:764px;width:10px;height:10px;background:#e6efee;"></div>
<div class="r" style="left:29px;top:834px;width:10px;height:10px;background:#b4b4b7;"></div>
<div class="r" style="left:59px;top:834px;width:10px;height:10px;background:#eeeeef;"></div>
<div class="r" style="left:69px;top:834px;width:10px;height:10px;background:#e5e5e7;"></div>
<div class="r" style="left:79px;top:834px;width:10px;height:10px;background:#e5e5e7;"></div>
<div class="r" style="left:29px;top:844px;width:10px;height:10px;background:#b4b4b7;"></div>
<div class="r" style="left:39px;top:844px;width:10px;height:10px;background:#c3c4c5;"></div>
<div class="r" style="left:49px;top:844px;width:10px;height:10px;background:#f3f3f3;"></div>
<div class="r" style="left:59px;top:844px;width:10px;height:10px;background:#e9e9ea;"></div>
<div class="r" style="left:69px;top:844px;width:10px;height:10px;background:#a3a5aa;"></div>
<div class="r" style="left:79px;top:844px;width:10px;height:10px;background:#6f757e;"></div>
<div class="r" style="left:59px;top:864px;width:10px;height:10px;background:#aaaaad;"></div>
<div class="r" style="left:199px;top:844px;width:10px;height:10px;background:#eef2f1;"></div>
<div class="r" style="left:209px;top:844px;width:10px;height:10px;background:#eef2f1;"></div>
<div class="r" style="left:219px;top:844px;width:10px;height:10px;background:#eef2f1;"></div>
<div class="r" style="left:229px;top:844px;width:10px;height:10px;background:#eef2f1;"></div>
<div class="r" style="left:239px;top:844px;width:10px;height:10px;background:#eef2f1;"></div>
<div class="r" style="left:249px;top:844px;width:10px;height:10px;background:#eef2f1;"></div>
<div class="r" style="left:259px;top:844px;width:8px;height:10px;background:#eef2f1;"></div>
<div class="r" style="left:199px;top:854px;width:10px;height:10px;background:#eaf2f0;"></div>
<div class="r" style="left:209px;top:854px;width:10px;height:10px;background:#eef1f0;"></div>
<div class="r" style="left:219px;top:854px;width:10px;height:10px;background:#97d2c1;"></div>
<div class="r" style="left:229px;top:854px;width:10px;height:10px;background:#eff2f1;"></div>
<div class="r" style="left:239px;top:854px;width:10px;height:10px;background:#a9dbcf;"></div>
<div class="r" style="left:249px;top:854px;width:10px;height:10px;background:#cfe7e1;"></div>
<div class="r" style="left:259px;top:854px;width:8px;height:10px;background:#5fbc9d;"></div>
<div class="r" style="left:267px;top:541px;width:4px;height:14px;overflow:hidden"><div class="a" style="left:-6px;top:0;font-size:14px;line-height:14px;color:#18a686">3</div></div>
<div class="r" style="left:266px;top:851px;width:6px;height:14px;overflow:hidden"><div class="a" style="left:-4px;top:0;font-size:14px;line-height:14px;color:#18a686">A</div></div>
<div class="r" style="left:606px;top:62px;width:252px;height:263px;background:#fff;border:1px solid rgba(0,0,0,.15);border-top:0;border-radius:0 0 4px 4px;box-shadow:0 6px 12px rgba(0,0,0,.175)"></div>
<div class="r" style="left:607px;top:67px;width:250px;height:27px;background:#283648;"></div>
<div class="a n" style="top:73.30px;font-size:15px;line-height:15px;color:#fff;letter-spacing:-0.25px;left:627.5px;-webkit-text-stroke:0.35px #fff">Shipments Report</div>
<div class="r" style="left:607px;top:104px;width:250px;height:1px;background:#e5e5e5;"></div>
<div class="r" style="left:607px;top:206px;width:250px;height:1px;background:#e5e5e5;"></div>
<div class="r" style="left:607px;top:281px;width:250px;height:1px;background:#e5e5e5;"></div>
<div class="a n" style="top:120.30px;font-size:15px;line-height:15px;color:#7b8a8b;letter-spacing:-0.19px;left:627.5px;">Participant Response Report</div>
<div class="a n" style="top:148.30px;font-size:15px;line-height:15px;color:#7b8a8b;letter-spacing:-0.05px;left:627.5px;">Participant Performance Report</div>
<div class="a n" style="top:175.30px;font-size:15px;line-height:15px;color:#7b8a8b;letter-spacing:0.06px;left:627.5px;">Corrective Actions Report</div>
<div class="a n" style="top:223.30px;font-size:15px;line-height:15px;color:#7b8a8b;letter-spacing:-0.1px;left:627.5px;">VL Sample Analysis</div>
<div class="a n" style="top:250.30px;font-size:15px;line-height:15px;color:#7b8a8b;letter-spacing:-0.1px;left:627.5px;">VL Assay Distribution</div>
<div class="a n" style="top:298.30px;font-size:15px;line-height:15px;color:#7b8a8b;letter-spacing:-0.1px;left:627.5px;">Annual Report</div>
</body></html>
